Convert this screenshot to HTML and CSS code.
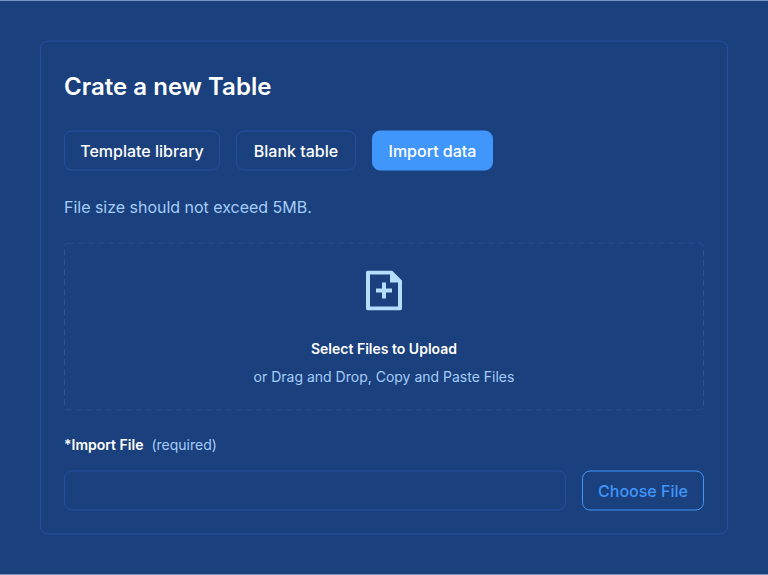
FILE: index.html
```html
<!DOCTYPE html>
<html lang="en">
<head>
<meta charset="utf-8">
<title>Create a new table</title>
<link rel="stylesheet" href="styles.css">
</head>
<body>
<main class="card">
  <h1 class="title">Crate a new Table</h1>
  <div class="tabs">
    <button class="tab tab-template">Template library</button>
    <button class="tab tab-blank">Blank table</button>
    <button class="tab tab-active">Import data</button>
  </div>
  <p class="hint">File size should not exceed 5MB.</p>
  <section class="dropzone">
    <svg class="outline" width="640" height="168"><rect x="0.5" y="0.5" width="639" height="167" rx="4"/></svg>
    <svg class="file-icon" width="36" height="40" viewBox="0 0 36 40">
      <path fill-rule="evenodd" d="M0 2a2 2 0 0 1 2-2H26L36 10V38a2 2 0 0 1-2 2H2a2 2 0 0 1-2-2ZM4 4V36H32V12H24V4ZM16 12h4v6h6v4h-6v6h-4v-6h-6v-4h6Z"/>
    </svg>
    <strong class="select">Select Files to Upload</strong>
    <span class="drag">or Drag and Drop, Copy and Paste Files</span>
  </section>
  <label class="label" for="file"><b>*Import File</b><span>(required)</span></label>
  <div class="file-row">
    <input class="file-input" id="file" type="text">
    <button class="choose">Choose File</button>
  </div>
</main>
</body>
</html>
```
FILE: styles.css
```css
* { box-sizing: border-box; }
body {
  margin: 0;
  height: 575px;
  padding: 40px;
  background: #1a407d;
  color: #fff;
  font-family: Inter, sans-serif;
  border-top: 1px solid #7394c4;
  border-bottom: 1px solid #7f93b8;
  overflow: hidden;
}
.card {
  height: 494px;
  width: 688px;
  padding: 23px;
  border: 1px solid #2450a0;
  border-radius: 8px;
  transform: translateY(-0.5px);
}
.title { margin: 6px 0 0; font-size: 24px; line-height: 32px; font-weight: 600; letter-spacing: 0.02px; }
.tabs { display: flex; gap: 16px; margin-top: 28px; }
.tab, .choose {
  height: 40px;
  padding: 0;
  border: 1px solid #2450a0;
  border-radius: 8px;
  background: transparent;
  color: #fff;
  font: 500 16px/24px Inter, sans-serif;
}
.tab-template { width: 156px; }
.tab-blank { width: 120px; }
.tab-active { width: 121px; background: #4096fa; border-color: #4096fa; }
.hint { margin: 24px 0 0; color: #a5cdfa; font-size: 16px; line-height: 24px; letter-spacing: -0.02px; }
.dropzone {
  position: relative;
  display: flex;
  flex-direction: column;
  align-items: center;
  height: 168px;
  margin-top: 24px;
  padding-top: 28px;
}
.outline { position: absolute; inset: 0; }
.outline rect { fill: none; stroke: #2b5493; stroke-dasharray: 6 4; }
.file-icon { fill: #b4deff; }
.select { margin-top: 28px; font-size: 14px; line-height: 20px; font-weight: 600; }
.drag { margin-top: 8px; color: #a5cdfa; font-size: 14px; line-height: 20px; }
.label { display: flex; gap: 8px; margin-top: 24px; font-size: 14px; line-height: 20px; }
.label b { font-weight: 600; }
.label span { color: #a5cdfa; }
.file-row { display: flex; gap: 16px; margin-top: 16px; }
.file-input {
  flex: 1;
  height: 40px;
  border: 1px solid #2450a0;
  border-radius: 8px;
  background: transparent;
}
.choose { width: 122px; border-color: #4096fa; color: #4096fa; }
```
